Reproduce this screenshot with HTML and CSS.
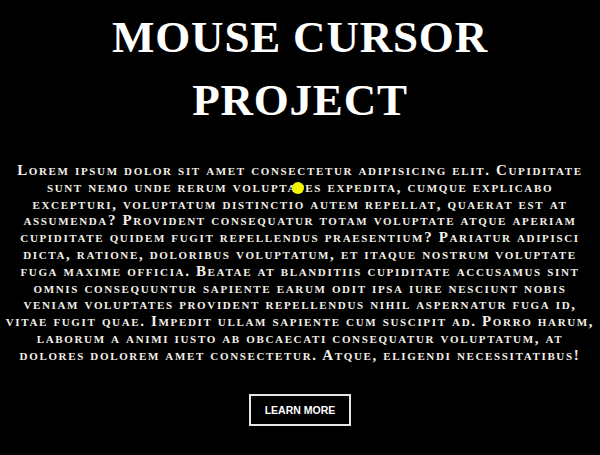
FILE: index.html
```html
<!DOCTYPE html>
<html>
<head>
<meta charset="utf-8">
<link rel="stylesheet" href="styles.css">
</head>
<body>
<main class="hero">
  <h1 class="title">MOUSE CURSOR<br>PROJECT</h1>
  <p class="text">Lorem ipsum dolor sit amet consectetur adipisicing elit. Cupiditate<br>sunt nemo unde rerum voluptates expedita, cumque explicabo<br>excepturi, voluptatum distinctio autem repellat, quaerat est at<br>assumenda? Provident consequatur totam voluptate atque aperiam<br>cupiditate quidem fugit repellendus praesentium? Pariatur adipisci<br>dicta, ratione, doloribus voluptatum, et itaque nostrum voluptate<br>fuga maxime officia. Beatae at blanditiis cupiditate accusamus sint<br>omnis consequuntur sapiente earum odit ipsa iure nesciunt nobis<br>veniam voluptates provident repellendus nihil aspernatur fuga id,<br>vitae fugit quae. Impedit ullam sapiente cum suscipit ad. Porro harum,<br>laborum a animi iusto ab obcaecati consequatur voluptatum, at<br>dolores dolorem amet consectetur. Atque, eligendi necessitatibus!</p>
  <a class="btn" href="#">LEARN MORE</a>
</main>
<div class="cursor"></div>
</body>
</html>
```
FILE: styles.css
```css
html, body {
  margin: 0;
  padding: 0;
  background: #000;
  height: 100%;
}
.hero {
  display: flex;
  flex-direction: column;
  align-items: center;
  padding: 6px 2px 0;
  color: #fff;
}
.title {
  margin: 0;
  font-family: "Liberation Serif", "DejaVu Serif", serif;
  font-weight: 700;
  font-size: 45px;
  line-height: 63px;
  letter-spacing: 0.8px;
  text-align: center;
}
.text {
  margin: 30px 0 0;
  font-family: "Liberation Serif", "DejaVu Serif", serif;
  font-weight: 700;
  font-variant: small-caps;
  font-size: 15px;
  line-height: 16.8px;
  letter-spacing: 1.65px;
  text-align: center;
  color: #f4f0e8;
}
.btn {
  margin-top: 30px;
  padding: 8px 14px;
  border: 2px solid #e6e6e6;
  color: #fff;
  text-decoration: none;
  font-family: "Liberation Sans", Arial, sans-serif;
  font-weight: 700;
  font-size: 10.5px;
  line-height: 12px;
}
.cursor {
  position: absolute;
  left: 292px;
  top: 182px;
  width: 12px;
  height: 12px;
  border-radius: 50%;
  background: #f5f500;
}
```
